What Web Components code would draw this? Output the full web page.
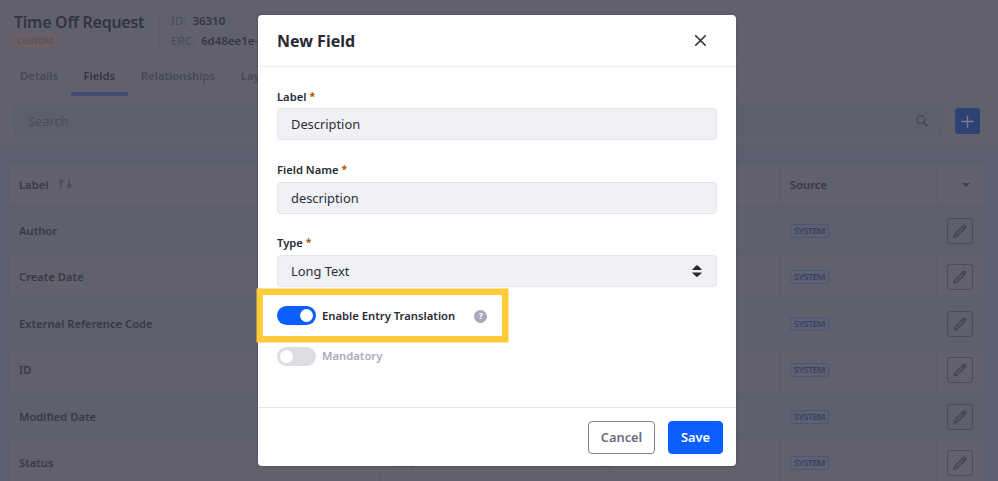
<!DOCTYPE html>
<html lang="en">
<head>
<meta charset="utf-8">
<title>Time Off Request</title>
<style>
html,body{margin:0;height:481px;overflow:hidden}
body{position:relative;background:#61616e;font:600 11.2px/16px "Noto Sans","Open Sans",sans-serif;color:#42424f}
</style>
</head>
<body>
<object-page></object-page>
<field-modal heading="New Field">
  <form-field label="Label" value="Description"></form-field>
  <form-field label="Field Name" value="description"></form-field>
  <form-field label="Type" value="Long Text" select></form-field>
  <toggle-switch checked help>Enable Entry Translation</toggle-switch>
  <toggle-switch disabled>Mandatory</toggle-switch>
  <action-button slot="actions">Cancel</action-button>
  <action-button slot="actions" primary>Save</action-button>
</field-modal>
<highlight-frame></highlight-frame>
<script>
const define = (name, render) => customElements.define(name, class extends HTMLElement {
  connectedCallback() {
    if (this.shadowRoot) return;
    this.attachShadow({mode: 'open'}).innerHTML = '<style>*{box-sizing:border-box}:host{box-sizing:border-box}</style>' + render(this);
  }
});

define('ui-badge', el => `<style>
:host{display:inline-flex;align-items:center;justify-content:center;height:14px;width:39px;border:1px solid #4a5681;border-radius:2px;color:#36416c;font-size:9px;letter-spacing:-.5px;line-height:12px;font-weight:600}
:host([kind=custom]){width:42px;height:13px;border-color:#85594e;color:#744a42;font-size:9px;letter-spacing:-.4px}
</style><slot></slot>`);

define('edit-button', () => `<style>
:host{display:flex;width:26px;height:26px;border:1px solid #4c4b5a;border-radius:3px;align-items:center;justify-content:center;color:#454452}
svg{display:block}</style>
<svg width="14" height="14" viewBox="0 0 14 14" fill="none" stroke="currentColor" stroke-width="1.5" stroke-linejoin="round"><path d="M1.2 12.8 1.7 10.4 10 1.9Q11.1.9 12.2 1.8 13.1 2.9 12.1 4L3.7 12.3ZM9.2 2.8l2 2"/></svg>`);

define('page-header', () => `<style>
:host{display:flex;height:52px;border-top:1px solid #5d5c6a;border-bottom:1px solid #5e5d6b;margin-top:5px;padding:7px 0 0 14px}
.title{width:146px;height:36px;border-right:1px solid #5d5c6b;flex:none}
h1{font-size:16px;letter-spacing:-.28px;line-height:20px;margin:-1px 0 2px;font-weight:600;color:#343340;white-space:nowrap}
ui-badge{display:flex}
.meta{padding-left:11px;font-size:11.5px;line-height:20px;margin-top:-2px;white-space:nowrap}
.meta span{font-weight:400;color:#4a4a59}.meta b{font-weight:600;color:#353541;margin-left:6px}
</style><div class="title"><h1>Time Off Request</h1><ui-badge kind="custom">CUSTOM</ui-badge></div>
<div class="meta"><div><span>ID:</span><b>36310</b></div><div><span>ERC:</span><b>6d48ee1e-</b></div></div>`);

define('tab-bar', () => `<style>
:host{display:flex;height:39px;border-bottom:1px solid #5d5d6b;padding-left:7px;color:#484858;font-size:11.3px}
span{padding:11px 12.7px 0 13px;height:39px;white-space:nowrap}
.on{color:#363541;border-bottom:4px solid #414d77;padding:11px 12.7px 0}
</style><span>Details</span><span class="on">Fields</span><span>Relationships</span><span>Layouts</span>`);

define('search-bar', () => `<style>
:host{display:flex;align-items:center;gap:13px;height:51px;border-bottom:1px solid #5b5c69;padding:0 18px 0 14px}
.box{display:flex;align-items:center;justify-content:space-between;width:928px;height:32px;padding:0 13px;background:#5d5f6c;border:1px solid #5b5d6a;border-radius:4px;font-size:12.8px;font-weight:400;color:#4a4b59}
.add{display:flex;width:25px;height:26px;border-radius:3px;background:#2f4274;align-items:center;justify-content:center}
svg{display:block}
</style><div class="box"><span>Search</span><svg width="12" height="12" viewBox="0 0 12 12" fill="none" stroke="#484854" stroke-width="1.5"><circle cx="4.9" cy="4.7" r="3.9"/><path d="m7.8 7.6 3.5 3.5" stroke-width="1.8"/></svg></div>
<div class="add"><svg width="13" height="13" viewBox="0 0 13 13" fill="none" stroke="#7c7d8c" stroke-width="1.4"><path d="M6.5.5v12M.5 6.5h12"/></svg></div>`);

define('table-row', el => `<style>
:host{display:grid;grid-template-columns:372px 205px 194px 157px 1fr;height:46.4px;background:${el.hasAttribute('even') ? '#5e606d' : '#61606d'};border-top:1px solid #5b5b69;color:#393946}
:host(:first-child){border-top:0}
div{display:flex;align-items:center;padding-left:10px;border-left:1px solid #5c5c6a}
div:first-child{border-left:0}
div:last-child{padding-left:10px}
div:first-child{padding-left:9.6px;font-size:11.15px}
.plain{font-weight:400}
svg{display:block}.sort{margin-left:10px;margin-top:-3px}.caret{margin-left:15px}
</style>` + (el.hasAttribute('head')
 ? `<div>Label<svg class="sort" width="15" height="11" viewBox="0 0 15 11" fill="none" stroke="#4b4a57" stroke-width="1.5"><path d="M3.2 10.5V2M11.2.5V9"/><path d="M.3 4.2 3.2.6l2.9 3.6ZM8.3 6.8l2.9 3.6 2.9-3.6Z" fill="#4b4a57" stroke="none"/></svg></div><div></div><div></div><div>Source</div><div><svg class="caret" width="8" height="4" viewBox="0 0 8 4"><path d="M.6 0h6.8q.6 0 .2.5L4.5 3.8q-.5.4-1 0L.4.5Q0 0 .6 0" fill="#424150"/></svg></div>`
 : `<div><slot></slot></div><div class="plain">${el.getAttribute('type') || ''}</div><div class="plain">${el.getAttribute('required') || ''}</div><div><ui-badge>SYSTEM</ui-badge></div><div><edit-button></edit-button></div>`));

define('field-table', () => `<style>
:host{display:block;margin:14px 12px 0 7px;border:1px solid #5b5c69;border-radius:4px 4px 0 0;overflow:hidden}
table-row[head]{height:45.4px}
</style><table-row head></table-row><table-row even>Author</table-row><table-row>Create Date</table-row><table-row even>External Reference Code</table-row><table-row>ID</table-row><table-row even>Modified Date</table-row><table-row type="Text" required="No">Status</table-row>`);

define('object-page', () => `<style>
:host{display:flow-root;height:481px;overflow:hidden}
.body{display:flow-root;background:#5c5f6d;height:334px}
</style><page-header></page-header><tab-bar></tab-bar><search-bar></search-bar><div class="body"><field-table></field-table></div>`);

define('form-field', el => `<style>
:host{display:block;height:73px}
label{display:flex;gap:3px;line-height:16px;height:20px;align-items:flex-start;padding-top:1px;color:#292a35}
:host([label="Field Name"]) label,:host([select]) label{height:21px}
i{font-style:normal;font-weight:700;color:#b95000;font-size:10.5px;margin-top:-1px}
.input{display:flex;align-items:center;justify-content:space-between;height:32px;padding:0 14px 0 13px;border:1px solid #e4e4ea;border-radius:4px;background:#f0f1f5;color:#2c2d38;font-size:12.85px;font-weight:400}
svg{display:block}
</style><label>${el.getAttribute('label')}<i>*</i></label><div class="input"><span>${el.getAttribute('value')}</span>${el.hasAttribute('select') ? '<svg width="10" height="12" viewBox="0 0 10 12" fill="#272833"><path d="M.8 5Q0 5 .5 4.2L4.2.6Q5 0 5.8.6L9.5 4.2Q10 5 9.2 5ZM.8 7.5h8.4q.8 0 .3.8L5.8 11.6Q5 12.2 4.2 11.6L.5 8.3Q0 7.5.8 7.5"/></svg>' : ''}</div>`);

define('toggle-switch', el => `<style>
:host{display:flex;align-items:center;height:19px;margin:-1px 0 23px;color:#2a2b36;font-size:11.25px}
:host([disabled]){color:#a9a9bc}
:host([disabled]) .text{margin-top:-1px}
.track{display:flex;width:39px;height:19px;border-radius:10px;padding:3px;background:#dddde4;margin-right:6px}
:host([checked]) .track{background:#0b5fff;justify-content:flex-end}
.track::after{content:"";width:13px;height:13px;border-radius:50%;background:#fff}
.help{display:flex;align-items:center;justify-content:center;margin:1px 0 0 19px;width:13px;height:13px;border-radius:50%;background:#a7a9bc;color:#fff;font-size:9px;line-height:12px;font-weight:700}
</style><span class="track"></span><span class="text"><slot></slot></span>${el.hasAttribute('help') ? '<span class="help">?</span>' : ''}`);

define('action-button', () => `<style>
:host{display:flex;align-items:center;justify-content:center;width:67px;height:33px;padding-bottom:1px;border:1px solid #7d7e90;border-radius:4px;color:#6b6c7e;font-size:12.8px;font-weight:600}
:host([primary]){width:55px;background:#0b5fff;border-color:#0b5fff;color:#fff}
</style><slot></slot>`);

define('field-modal', el => `<style>
:host{position:absolute;left:258px;top:15px;width:478px;height:451px;display:flex;flex-direction:column;background:#fff;border-radius:4px;box-shadow:0 0 3px 0 #4b4a58}
header{display:flex;align-items:center;justify-content:space-between;height:52px;border-bottom:1px solid #edeef2;padding:0 30px 0 19px;flex:none;font-size:16px;font-weight:700;color:#272833}
main{flex:1;padding:21px 19px 0}
footer{display:flex;gap:13px;justify-content:flex-end;height:59px;border-top:1px solid #e5e5eb;padding:13px 13px 0}
svg{display:block}
</style><header><span>${el.getAttribute('heading')}</span><svg width="11" height="11" viewBox="0 0 11 11" fill="none" stroke="#272833" stroke-width="1.5" stroke-linecap="round"><path d="m.7.7 9.6 9.6m0-9.6L.7 10.3"/></svg></header><main><slot></slot></main><footer><slot name="actions"></slot></footer>`);

define('highlight-frame', () => `<style>:host{position:absolute;left:257px;top:289px;width:251px;height:53px;border:6px solid #ffcb38;box-shadow:0 0 0 .5px #ffcb38}</style>`);
</script>
</body>
</html>
